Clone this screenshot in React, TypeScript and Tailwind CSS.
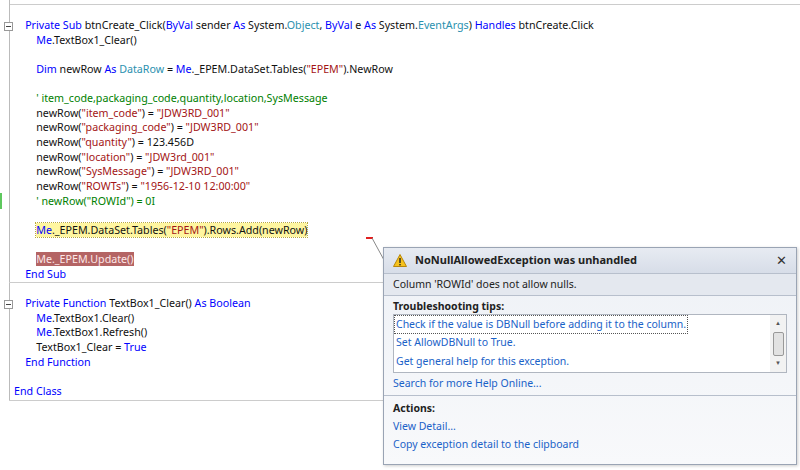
type Tok = [string, string];

const K = "text-[#0000ff]";
const T = "text-[#2b91af]";
const S = "text-[#a31515]";
const C = "text-[#008000]";
const P = "text-[#111]";

type Line = { indent: number; toks: Tok[]; mark?: "add" | "upd" };

const lines: Line[] = [
  { indent: 4, toks: [["Private Sub", K], [" btnCreate_Click(", P], ["ByVal", K], [" sender ", P], ["As", K], [" System.", P], ["Object", T], [", ", P], ["ByVal", K], [" e ", P], ["As", K], [" System.", P], ["EventArgs", T], [") ", P], ["Handles", K], [" btnCreate.Click", P]] },
  { indent: 8, toks: [["Me", K], [".TextBox1_Clear()", P]] },
  { indent: 0, toks: [] },
  { indent: 8, toks: [["Dim", K], [" newRow ", P], ["As", K], [" ", P], ["DataRow", T], [" = ", P], ["Me", K], ["._EPEM.DataSet.Tables(", P], ['"EPEM"', S], [").NewRow", P]] },
  { indent: 0, toks: [] },
  { indent: 8, toks: [["' item_code,packaging_code,quantity,location,SysMessage", C]] },
  { indent: 8, toks: [["newRow(", P], ['"item_code"', S], [") = ", P], ['"JDW3RD_001"', S]] },
  { indent: 8, toks: [["newRow(", P], ['"packaging_code"', S], [") = ", P], ['"JDW3RD_001"', S]] },
  { indent: 8, toks: [["newRow(", P], ['"quantity"', S], [") = 123.456D", P]] },
  { indent: 8, toks: [["newRow(", P], ['"location"', S], [") = ", P], ['"JDW3rd_001"', S]] },
  { indent: 8, toks: [["newRow(", P], ['"SysMessage"', S], [") = ", P], ['"JDW3RD_001"', S]] },
  { indent: 8, toks: [["newRow(", P], ['"ROWTs"', S], [") = ", P], ['"1956-12-10 12:00:00"', S]] },
  { indent: 8, toks: [["' newRow(\"ROWId\") = 0I", C]] },
  { indent: 0, toks: [] },
  { indent: 8, mark: "add", toks: [["Me", K], ["._EPEM.DataSet.Tables(", P], ['"EPEM"', S], [").Rows.Add(newRow)", P]] },
  { indent: 0, toks: [] },
  { indent: 8, mark: "upd", toks: [["Me._EPEM.Update()", "text-[#fde8e8]"]] },
  { indent: 4, toks: [["End Sub", K]] },
  { indent: 0, toks: [] },
  { indent: 4, toks: [["Private Function", K], [" TextBox1_Clear() ", P], ["As Boolean", K]] },
  { indent: 8, toks: [["Me", K], [".TextBox1.Clear()", P]] },
  { indent: 8, toks: [["Me", K], [".TextBox1.Refresh()", P]] },
  { indent: 8, toks: [["TextBox1_Clear = ", P], ["True", K]] },
  { indent: 4, toks: [["End Function", K]] },
  { indent: 0, toks: [] },
  { indent: 0, toks: [["End Class", K]] },
];

function Link({ children, boxed }: { children: string; boxed?: boolean }) {
  return (
    <div className={`h-[19px] leading-[17px] text-[#1a62c8] ${boxed ? "border border-dotted border-[#555] w-fit px-[1px]" : "px-[2px]"}`}>
      {children}
    </div>
  );
}

export default function App() {
  return (
    <div className="relative w-[800px] h-[470px] bg-white overflow-hidden">
      <div className="absolute left-[9px] top-0 w-[1px] h-[400px] bg-[#bbb]" />
      <div className="h-[5px] ml-[9px] border-b border-[#ccc]" />
      <div className="absolute left-[4px] top-[22px] w-[9px] h-[9px] border border-[#999] bg-white flex items-center justify-center"><div className="w-[5px] h-[1px] bg-[#444]" /></div>
      <div className="absolute left-[4px] top-[300px] w-[9px] h-[9px] border border-[#999] bg-white flex items-center justify-center"><div className="w-[5px] h-[1px] bg-[#444]" /></div>
      <div className="absolute left-[0px] top-[193px] w-[2px] h-[16px] bg-[#5ec85e]" />
      <div className="absolute left-[9px] top-[282px] w-[380px] h-[1px] bg-[#ccc]" />
      <div className="absolute left-[9px] top-[400px] w-[380px] h-[1px] bg-[#ccc]" />
      <div className="pt-[13px] pl-[14px] font-['Liberation_Mono'] text-[10.7px] leading-[14.65px] whitespace-pre">
        {lines.map((l, i) => (
          <div key={i} className="h-[14.65px]">
            <span>{" ".repeat(l.indent)}</span>
            <span className={l.mark === "add" ? "bg-[#fff6a0] outline outline-1 outline-dotted outline-[#b8a840]" : l.mark === "upd" ? "bg-[#b46464]" : ""}>
              {l.toks.map(([t, c], j) => <span key={j} className={c}>{t}</span>)}
            </span>
          </div>
        ))}
      </div>
      <div className="absolute left-[366px] top-[237px] w-[7px] h-[2px] border border-[#e02020]" />
      <svg className="absolute left-[372px] top-[238px]" width="14" height="24"><line x1="0" y1="0" x2="12" y2="22" stroke="#888" /></svg>

      <div className="absolute left-[383px] top-[247px] w-[414px] h-[218px] border border-[#9aa4b4] bg-[linear-gradient(#eef1f6,#f8f9fb)] font-['Open_Sans'] text-[10.5px] text-[#222] shadow-[1px_1px_3px_rgba(0,0,0,0.2)]">
        <div className="h-[26px] flex items-center px-[9px] bg-[linear-gradient(#e7ebf2,#d7dde8)] border-b border-[#b7bfcc]">
          <svg width="14" height="13" viewBox="0 0 14 13"><path d="M7 0.5 L13.5 12.5 H0.5 Z" fill="#f6c21c" stroke="#b8860b" /><rect x="6.3" y="4" width="1.4" height="5" fill="#222" /><rect x="6.3" y="10" width="1.4" height="1.4" fill="#222" /></svg>
          <span className="ml-[8px] font-bold text-[11px]">NoNullAllowedException was unhandled</span>
          <span className="ml-auto text-[13px] text-[#333]">✕</span>
        </div>
        <div className="h-[22px] px-[9px] flex items-center border-b border-[#b7bfcc] bg-[#e4e8ef]">Column 'ROWId' does not allow nulls.</div>
        <div className="px-[9px] pt-[3px]">
          <div className="font-bold h-[15px]">Troubleshooting tips:</div>
          <div className="flex border border-[#b0b6c0] bg-white h-[59px]">
            <div className="flex-1 pt-[0px]">
              <Link boxed>Check if the value is DBNull before adding it to the column.</Link>
              <Link>Set AllowDBNull to True.</Link>
              <Link>Get general help for this exception.</Link>
            </div>
            <div className="w-[16px] bg-[#f2f2f2] flex flex-col items-center justify-between py-[4px] text-[6px] text-[#555]">
              <span>▲</span>
              <div className="w-[11px] h-[24px] border border-[#999] bg-[#e2e2e2] rounded-[2px]" />
              <span>▼</span>
            </div>
          </div>
          <div className="h-[22px] flex items-center text-[#1a62c8]">Search for more Help Online...</div>
        </div>
        <div className="border-t border-[#b7bfcc] px-[9px] pt-[5px]">
          <div className="font-bold h-[18px]">Actions:</div>
          <div className="h-[18px] text-[#1a62c8]">View Detail...</div>
          <div className="h-[18px] text-[#1a62c8]">Copy exception detail to the clipboard</div>
        </div>
      </div>
    </div>
  );
}
